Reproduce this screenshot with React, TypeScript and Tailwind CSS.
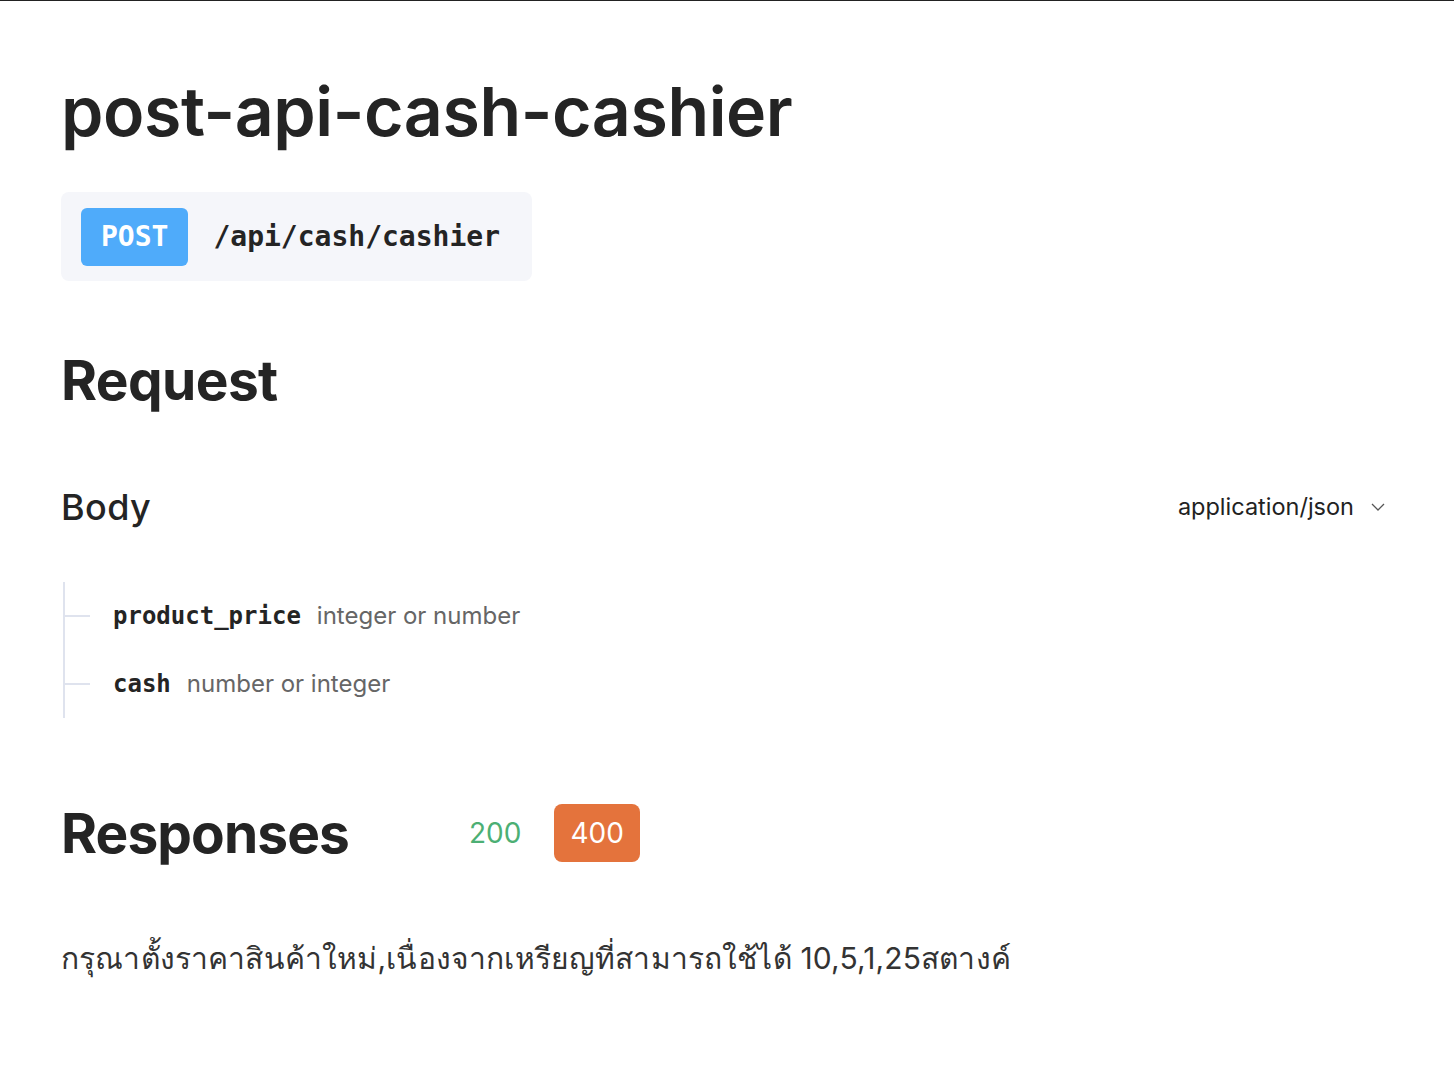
import React from 'react'

const sans = { fontFamily: 'Inter, "Noto Sans", sans-serif' }

export default function App() {
    const fields = [
        { name: 'product_price', type: 'integer or number' },
        { name: 'cash', type: 'number or integer' },
    ]

    return (
        <div className="min-h-[1084px] bg-white border-t border-[#222] text-[#242424] font-['Inter','Noto_Sans',sans-serif]">
            <div className="px-[61px] pt-[70px]">
                <h1 className="text-[68px] leading-[80px] font-semibold tracking-[-0.4px]">post-api-cash-cashier</h1>

                <div className="mt-[41px] inline-flex items-center gap-[25px] bg-[#f5f6fa] rounded-lg pl-5 pr-8 pt-4 pb-[15px] font-['DejaVu_Sans_Mono',monospace]">
                    <span className="bg-[#4fabfa] text-white rounded-md px-5 h-[58px] flex items-center text-[28px] font-bold">POST</span>
                    <span className="text-[28px] font-bold">/api/cash/cashier</span>
                </div>

                <h2 className="mt-[67px] text-[55px] leading-[64px] font-bold tracking-[-0.6px]">Request</h2>

                <div className="mt-[73px] flex items-center justify-between pr-2">
                    <h3 className="text-[36px] leading-[44px] font-medium tracking-[0.4px]">Body</h3>
                    <div className="flex items-center gap-[17px] text-[23.5px] text-[#222]">
                        <span>application/json</span>
                        <svg width="14" height="8" viewBox="0 0 14 8" fill="none" stroke="#555" strokeWidth="1.3">
                            <path d="M1 1l6 6 6-6" />
                        </svg>
                    </div>
                </div>

                <div className="mt-[53px] ml-[2px] border-l-2 border-[#dfe3ee]">
                    {fields.map((f) => (
                        <div key={f.name} className="flex items-center h-[68px]">
                            <div className="w-[25px] h-[2px] bg-[#dfe3ee]" />
                            <span className="ml-[23px] text-[24px] font-bold font-['DejaVu_Sans_Mono',monospace]">{f.name}</span>
                            <span className="ml-4 text-[24px] text-[#666]" style={sans}>{f.type}</span>
                        </div>
                    ))}
                </div>

                <div className="mt-[83px] flex items-center">
                    <h2 className="text-[55px] leading-[64px] font-bold tracking-[-0.9px] w-[408px]">Responses</h2>
                    <span className="text-[28px] text-[#4caf74]">200</span>
                    <span className="ml-[33px] bg-[#e4733c] text-white text-[28px] rounded-lg h-[58px] px-4 flex items-center">400</span>
                </div>

                <p className="mt-[71px] text-[30px] text-[#333] tracking-[0.15px]">กรุณาตั้งราคาสินค้าใหม่,เนื่องจากเหรียญที่สามารถใช้ได้ 10,5,1,25สตางค์</p>
            </div>
        </div>
    )
}
